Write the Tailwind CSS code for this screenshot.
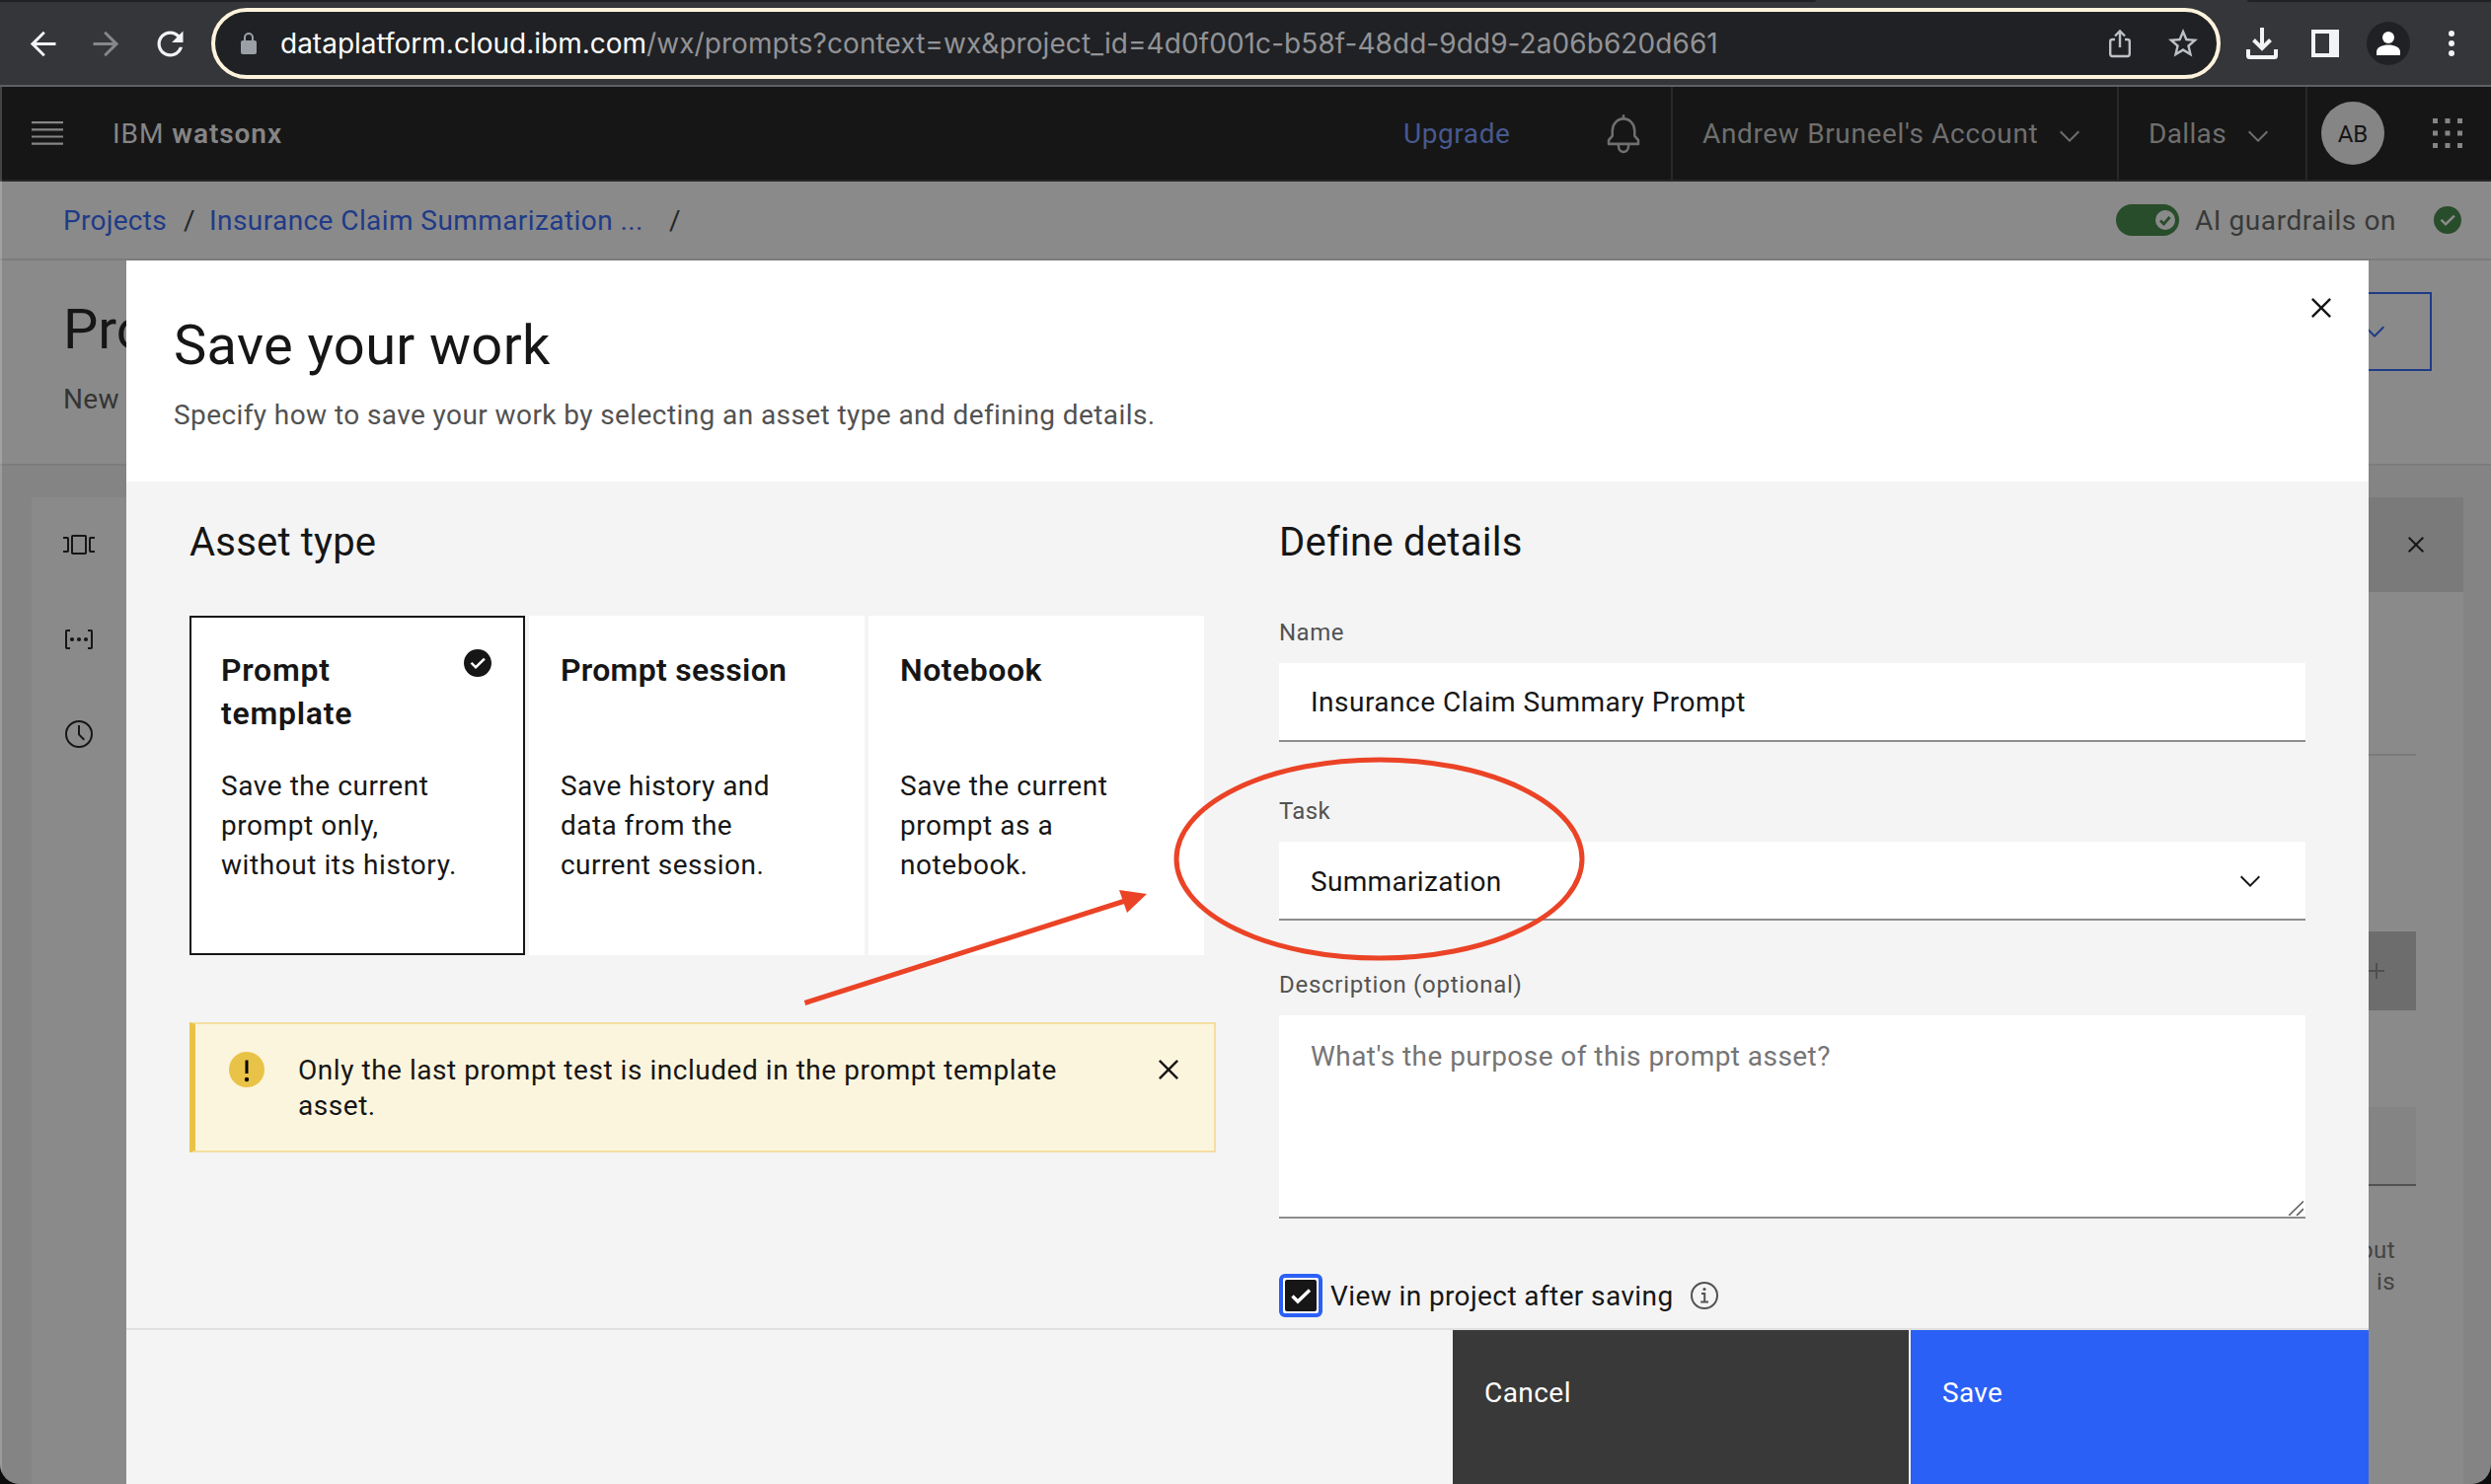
<!DOCTYPE html>
<html lang="en">
<head>
<meta charset="utf-8">
<title>IBM watsonx</title>
<script src="https://cdn.jsdelivr.net/npm/@tailwindcss/browser@4"></script>
</head>
<body class="bg-[#0c0c0c]">
<svg class="hidden">
  <symbol id="chevron" viewBox="0 0 16 16"><path d="M8 11L3 6l.7-.7L8 9.6l4.3-4.3.7.7z"/></symbol>
  <symbol id="close" viewBox="0 0 32 32"><path d="M24 9.4L22.6 8 16 14.6 9.4 8 8 9.4 14.6 16 8 22.6 9.4 24 16 17.4 22.6 24 24 22.6 17.4 16z"/></symbol>
  <symbol id="checkmark" viewBox="0 0 16 16"><path d="M8 1C4.1 1 1 4.1 1 8c0 3.9 3.1 7 7 7s7-3.1 7-7C15 4.1 11.9 1 8 1zM7 11L4.3 8.3l.9-.8L7 9.3l4-3.9.9.8L7 11z"/></symbol>
</svg>
<div class="relative flex h-[1504px] w-[2524px] flex-col overflow-hidden rounded-b-[20px] bg-[#848484] font-['Roboto',sans-serif] text-[28px] leading-10 tracking-[0.45px] text-[#161616]">

  <!-- Tab strip edge -->
  <div class="flex h-[2px] shrink-0 justify-between bg-[#35363a]">
    <div class="w-[1840px] rounded-br-[2px] bg-[#202124]"></div>
    <div class="w-[247px] rounded-bl-[2px] bg-[#202124]"></div>
  </div>

  <!-- Browser toolbar -->
  <div class="flex h-[86px] shrink-0 items-center border-b-2 border-[#5f6064] bg-[#35363a] pl-[24px] font-['Inter',sans-serif]">
    <svg class="size-[39px] shrink-0 fill-[#f1f3f4]" viewBox="0 0 24 24"><path d="M20 11.1H7.83l5.59-5.69L12.2 4.2l-8 7.8 8 7.8 1.21-1.21L7.83 12.9H20z"/></svg>
    <svg class="ml-[25px] size-[39px] shrink-0 fill-[#86878b]" viewBox="0 0 24 24"><path d="M4 11.1h12.17l-5.59-5.69L11.8 4.2l8 7.8-8 7.8-1.21-1.21 5.58-5.69H4z"/></svg>
    <svg class="ml-[26px] size-[39px] shrink-0 fill-[#f1f3f4]" viewBox="0 0 24 24"><path d="M17.65 6.35C16.2 4.9 14.21 4 12 4c-4.42 0-7.99 3.58-7.99 8s3.57 8 7.99 8c3.73 0 6.84-2.55 7.73-6h-2.08c-.82 2.33-3.04 4-5.65 4-3.31 0-6-2.69-6-6s2.69-6 6-6c1.66 0 3.14.69 4.22 1.78L13 11h7V4l-2.35 2.35z"/></svg>
    <div class="ml-[22px] flex h-[72px] w-[2036px] shrink-0 items-center rounded-full border-4 border-[#fdf3dc] bg-[#202124] pl-[26px]">
      <svg class="h-[22px] w-[16px] shrink-0" viewBox="0 0 16 22"><rect y="8" width="16" height="14" rx="2" fill="#9aa0a6"/><path d="M4 9V5a4 4 0 018 0v4" fill="none" stroke="#9aa0a6" stroke-width="2"/></svg>
      <span class="ml-[24px] whitespace-nowrap text-white">
        <span class="tracking-[0px]">dataplatform.cloud.ibm.com</span><span class="tracking-[0.07px] text-[#929397]">/wx/prompts?context=wx&amp;project_id=4d0f001c-b58f-48dd-9dd9-2a06b620d661</span>
      </span>
      <svg class="mr-[34px] ml-auto h-[30px] w-[24px] shrink-0" viewBox="0 0 24 30" fill="none" stroke="#bdc1c6" stroke-width="2.4"><path d="M7 11H4.500Q2.200 11 2.200 13V25.500Q2.200 28 4.500 28H19.500Q21.800 28 21.800 25.500V13Q21.800 11 19.500 11H17"/><path d="M12 19V3M7 7.500L12 2.500 17 7.500"/></svg>
      <svg class="mr-[16px] size-[36px] shrink-0 fill-[#bdc1c6]" viewBox="0 0 24 24"><path d="M22 9.240l-7.190-.620L12 2 9.190 8.630 2 9.240l5.460 4.730L5.820 21 12 17.270 18.180 21l-1.630-7.030L22 9.240zM12 15.400l-3.760 2.270 1-4.280-3.320-2.880 4.380-.380L12 6.100l1.710 4.040 4.380.380-3.320 2.880 1 4.280L12 15.400z"/></svg>
    </div>
    <svg class="ml-[26px] h-[32px] w-[32px] shrink-0" viewBox="0 0 32 32" fill="none" stroke="#f1f3f4" stroke-width="4"><path d="M16 0v20M7.500 12.500L16 21l8.500-8.500"/><path d="M2 22v6.500Q2 30 3.500 30h25q1.500 0 1.500-1.500V22"/></svg>
    <svg class="ml-[34px] size-[28px] shrink-0" viewBox="0 0 28 28"><path fill="#f1f3f4" fill-rule="evenodd" d="M0 0h28v28H0zM4 4v20h14V4z"/></svg>
    <svg class="ml-[28px] size-[44px] shrink-0" viewBox="0 0 44 44"><circle cx="22" cy="22" r="22" fill="#202124"/><circle cx="22" cy="16" r="6" fill="#fff"/><path fill="#fff" d="M10 34v-3.500c0-4.500 6-7 12-7s12 2.500 12 7V34z"/></svg>
    <svg class="ml-[39px] h-[28px] w-[6px] shrink-0 fill-[#f1f3f4]" viewBox="0 0 6 28"><circle cx="3" cy="4" r="3"/><circle cx="3" cy="14" r="3"/><circle cx="3" cy="24" r="3"/></svg>
  </div>

  <!-- Product header -->
  <header class="flex h-[96px] shrink-0 items-center border-b-2 border-[#262626] bg-[#161616] text-[#6f6f6f]">
    <svg class="ml-[32px] h-[24px] w-[32px] fill-[#858585]" viewBox="0 0 32 24"><path d="M0 0h32v2.200H0zM0 7.200h32v2.200H0zM0 14.400h32v2.200H0zM0 21.600h32v2.200H0z"/></svg>
    <div class="ml-[50px] pt-[2px] tracking-[0.95px] whitespace-nowrap text-[#858585]">IBM <span class="font-semibold">watsonx</span></div>
    <div class="ml-auto w-[203px] pt-[2px] tracking-[0.58px] text-[#47598f]">Upgrade</div>
    <svg class="mt-[2px] mr-[28px] h-[43px] w-[40px] fill-[#6f6f6f]" preserveAspectRatio="none" viewBox="0 0 32 32"><path d="M28.707 19.293L26 16.586V13a10.014 10.014 0 00-9-9.949V1h-2v2.051A10.014 10.014 0 006 13v3.586l-2.707 2.707A1 1 0 003 20v3a1 1 0 001 1h7v.777a5.152 5.152 0 004.500 5.199A5.006 5.006 0 0021 25v-1h7a1 1 0 001-1v-3a1 1 0 00-.293-.707zM19 25a3 3 0 01-6 0v-1h6zm8-3H5v-1.586l2.707-2.707A1 1 0 008 17v-4a8 8 0 0116 0v4a1 1 0 00.293.707L27 20.414z"/></svg>
    <div class="flex h-full w-[452px] items-center border-l-2 border-[#282828] pl-[30px]">
      <span class="w-[356px] pt-[2px] tracking-[0.65px] whitespace-nowrap">Andrew Bruneel's Account</span>
      <svg class="mt-[6px] size-8 fill-[#6f6f6f]"><use href="#chevron"/></svg>
    </div>
    <div class="flex h-full w-[191px] items-center border-l-2 border-[#282828] pl-[30px]">
      <span class="w-[95px] pt-[2px] tracking-[0.35px]">Dallas</span>
      <svg class="mt-[6px] size-8 fill-[#6f6f6f]"><use href="#chevron"/></svg>
    </div>
    <div class="flex h-full w-[188px] items-center border-l-2 border-[#282828] pl-[14px]">
      <div class="flex size-16 items-center justify-center rounded-full bg-[#858585] pt-px text-2xl leading-10 tracking-normal text-[#161616]">AB</div>
      <svg class="ml-[49px] size-[30px] fill-[#858585]" viewBox="0 0 30 30"><path d="M0 0h5v5H0zM12.500 0h5v5h-5zM25 0h5v5h-5zM0 12.500h5v5H0zM12.500 12.500h5v5h-5zM25 12.500h5v5h-5zM0 25h5v5H0zM12.500 25h5v5h-5zM25 25h5v5h-5z"/></svg>
    </div>
  </header>

  <!-- Breadcrumb -->
  <div class="flex h-[80px] shrink-0 items-center border-b-2 border-[#7c7c7c] bg-[#8a8a8a] pr-[28px] pl-[64px] whitespace-nowrap">
    <span class="w-[122px] pt-[2px] tracking-[0.29px] text-[#1f3b88]">Projects</span>
    <span class="w-[26px] pt-[2px] text-[#262626]">/</span>
    <span class="w-[466px] pt-[2px] tracking-[0.42px] text-[#1f3b88]">Insurance Claim Summarization ...</span>
    <span class="pt-[2px] text-[#262626]">/</span>
    <svg class="ml-auto h-8 w-16" viewBox="0 0 64 32"><rect width="64" height="32" rx="16" fill="#284d2b"/><circle cx="50" cy="16" r="10" fill="#8a8a8a"/><path d="M45 16.500l3.500 3.500 6-7" fill="none" stroke="#284d2b" stroke-width="2.800"/></svg>
    <span class="ml-[16px] w-[240px] pt-[2px] tracking-[0.57px] text-[#393939]">AI guardrails on</span>
    <svg class="size-8 fill-[#284d2b]"><use href="#checkmark"/></svg>
  </div>

  <!-- Page title -->
  <div class="flex h-[208px] shrink-0 justify-between border-b-2 border-[#7c7c7c] bg-[#8a8a8a] pt-[32px] pr-[60px] pl-[64px]">
    <div>
      <h1 class="mt-[6px] text-[56px] leading-16 tracking-normal">Pro</h1>
      <p class="mt-[19px] tracking-[0.3px] text-[#343434]">New</p>
    </div>
    <div class="flex h-[80px] w-[240px] items-center justify-end border-2 border-[#1f3b88] pr-[40px]">
      <svg class="size-8 fill-[#1f3b88]"><use href="#chevron"/></svg>
    </div>
  </div>

  <!-- Workspace -->
  <div class="flex grow pt-[32px] pr-[28px] pl-[32px]">
    <div class="flex grow justify-between bg-[#8a8a8a]">
      <div class="flex w-[96px] flex-col">
        <div class="flex size-24 items-center justify-center"><svg class="h-[20px] w-[32px]" viewBox="0 0 32 20" fill="none" stroke="#161616" stroke-width="2"><rect x="9" y="1" width="14" height="18" rx=".8"/><path d="M0 3h4.200q.8 0 .8.800v12.400q0 .8-.8.800H0M32 3h-4.200q-.8 0-.8.800v12.400q0 .8.800.800H32"/></svg></div>
        <div class="flex size-24 items-center justify-center"><svg class="h-[20px] w-[28px]" viewBox="0 0 28 20" fill="none" stroke="#161616" stroke-width="2"><path d="M5 1H1.800q-.8 0-.8.800v16.400q0 .8.800.800H5M23 1h3.200q.8 0 .8.800v16.400q0 .8-.8.800H23"/><g fill="#161616" stroke="none"><circle cx="7" cy="10" r="2.100"/><circle cx="14" cy="10" r="2.100"/><circle cx="21" cy="10" r="2.100"/></g></svg></div>
        <div class="flex size-24 items-center justify-center"><svg class="size-[28px]" viewBox="0 0 28 28" fill="none" stroke="#161616" stroke-width="2"><circle cx="14" cy="14" r="13"/><path d="M14 5v9.400l5.300 5.300"/></svg></div>
      </div>
      <aside class="w-[500px]">
        <div class="flex h-24 items-center justify-end bg-[#7a7a7a] pr-[32px]"><svg class="size-8 fill-[#161616]"><use href="#close"/></svg></div>
        <div class="pr-[48px]">
          <div class="h-[166px] border-b-2 border-[#7b7b7b]"></div>
          <div class="mt-[178px] flex h-[80px] items-center justify-end bg-[#6d6d6d] pr-[32px]">
            <svg class="size-[16px]" viewBox="0 0 16 16" fill="none" stroke="#4f4f4f" stroke-width="2"><path d="M8 0v16M0 8h16"/></svg>
          </div>
          <div class="mt-[98px] h-[80px] border-b-2 border-[#525252] bg-[#848484]"></div>
          <p class="mt-[49px] pr-[21px] text-right text-2xl leading-8 text-[#444]">out<br>is</p>
        </div>
      </aside>
    </div>
  </div>

  <!-- Window edge highlight -->
  <div class="absolute top-[88px] bottom-0 left-0 w-[2px] bg-white/20"></div>

  <!-- Save dialog -->
  <section class="absolute top-[264px] left-[128px] flex h-[1240px] w-[2272px] flex-col bg-[#f4f4f4]">
    <div class="relative h-[224px] shrink-0 bg-white pt-[54px] pl-[48px]">
      <h2 class="text-[56px] leading-16 tracking-[0.35px]">Save your work</h2>
      <p class="mt-[19px] tracking-[0.41px] text-[#525252]">Specify how to save your work by selecting an asset type and defining details.</p>
      <svg class="absolute top-[28px] right-[28px] size-10 fill-[#161616]"><use href="#close"/></svg>
    </div>

    <div class="flex h-[858px] shrink-0 justify-between px-[64px] pt-[38px]">
      <div class="w-[1040px]">
        <h3 class="text-[40px] leading-12 tracking-[0.2px]">Asset type</h3>
        <div class="mt-[50px] flex gap-[4px]">
          <div class="relative h-[344px] w-[340px] border-2 border-[#161616] bg-white pt-[31px] pl-[30px]">
            <h4 class="h-[88px] text-[32px] leading-11 font-semibold tracking-[0.75px]">Prompt<br>template</h4>
            <p class="mt-[32px] tracking-[0.56px]">Save the current<br>prompt only,<br>without its history.</p>
            <svg class="absolute top-[30px] right-[30px] size-8 fill-[#161616]"><use href="#checkmark"/></svg>
          </div>
          <div class="h-[344px] w-[340px] bg-white pt-[33px] pl-[32px]">
            <h4 class="h-[88px] text-[32px] leading-11 font-semibold tracking-[0.3px]">Prompt session</h4>
            <p class="mt-[32px] tracking-[0.45px]">Save history and<br>data from the<br>current session.</p>
          </div>
          <div class="h-[344px] w-[340px] bg-white pt-[33px] pl-[32px]">
            <h4 class="h-[88px] text-[32px] leading-11 font-semibold tracking-[0.52px]">Notebook</h4>
            <p class="mt-[32px] tracking-[0.56px]">Save the current<br>prompt as a<br>notebook.</p>
          </div>
        </div>
        <div class="mt-[68px] flex h-[132px] border-2 border-l-[6px] border-[#f4dea0] border-l-[#e9c347] bg-[#fcf5dd] pl-[34px]">
          <svg class="mt-[28px] size-9 shrink-0" viewBox="0 0 36 36"><circle cx="18" cy="18" r="18" fill="#e9c347"/><path d="M16.500 8.500h3v13.500h-3z"/><circle cx="18" cy="28" r="2.200"/></svg>
          <p class="mt-[29px] ml-[34px] leading-9 tracking-[0.54px] whitespace-nowrap">Only the last prompt test is included in the prompt template<br>asset.</p>
          <svg class="mt-[26px] mr-[26px] ml-auto size-10 shrink-0 fill-[#161616]"><use href="#close"/></svg>
        </div>
      </div>

      <div class="w-[1040px]">
        <h3 class="text-[40px] leading-12 tracking-[0.25px]">Define details</h3>
        <div class="mt-[51px] text-2xl leading-8 tracking-[0.5px] text-[#525252]">Name</div>
        <div class="mt-[15px] flex h-[80px] items-center border-b-2 border-[#8d8d8d] bg-white px-8 pt-[2px] tracking-[0.49px]">Insurance Claim Summary Prompt</div>
        <div class="mt-[54px] text-2xl leading-8 tracking-[0.35px] text-[#525252]">Task</div>
        <div class="mt-[15px] flex h-[80px] items-center justify-between border-b-2 border-[#8d8d8d] bg-white pt-[2px] pr-[40px] pl-8 tracking-[0.33px]"><span class="pt-[2px]">Summarization</span><svg class="size-8 fill-[#161616]"><use href="#chevron"/></svg></div>
        <div class="mt-[49px] text-2xl leading-8 tracking-[0.72px] text-[#525252]">Description (optional)</div>
        <div class="relative mt-[15px] h-[206px] border-b-2 border-[#8d8d8d] bg-white px-8 pt-[22px] text-[#757575]">What's the purpose of this prompt asset?
          <svg class="absolute right-[2px] bottom-px size-[15px]" viewBox="0 0 15 15" fill="none" stroke="#5c5c5c" stroke-width="1.600"><path d="M0 15L15 .5M8 15l7-7"/></svg>
        </div>
        <div class="mt-[56px] flex items-center">
          <div class="flex size-11 items-center justify-center rounded-[6px] border-4 border-[#2b60f6] bg-white">
            <svg class="size-8" viewBox="0 0 32 32"><rect width="32" height="32" rx="2" fill="#161616"/><path d="M7.500 16.500l5.500 5.500 12-11.500" fill="none" stroke="#fff" stroke-width="3.400"/></svg>
          </div>
          <span class="ml-[8px] w-[365px] pt-px tracking-[0.4px]">View in project after saving</span>
          <svg class="size-[28px]" viewBox="0 0 28 28" fill="none" stroke="#525252" stroke-width="2"><circle cx="14" cy="14" r="13"/><path d="M11 12h3.200v8M10.200 20.500h7.800"/><circle cx="14" cy="7.500" r="1.600" fill="#525252" stroke="none"/></svg>
        </div>
      </div>
    </div>

    <div class="flex grow justify-end gap-[2px] border-t-2 border-[#e0e0e0] text-white">
      <div class="w-[462px] bg-[#393939] pt-[44px] pl-8">Cancel</div>
      <div class="w-[464px] bg-[#2b60f6] pt-[44px] pl-8 tracking-[0.28px]">Save</div>
    </div>
  </section>

  <!-- Annotation marks -->
  <svg class="absolute inset-0 h-[1504px] w-[2524px]" viewBox="0 0 2524 1504" fill="none" stroke="#eb4326" stroke-width="5">
    <ellipse cx="1397.500" cy="870.500" rx="205.500" ry="100.500"/>
    <path d="M815.500 1016.500L1140 913"/>
    <path d="M1162 906L1134 902l8 23z" fill="#eb4326" stroke="none"/>
  </svg>
</div>
</body>
</html>
